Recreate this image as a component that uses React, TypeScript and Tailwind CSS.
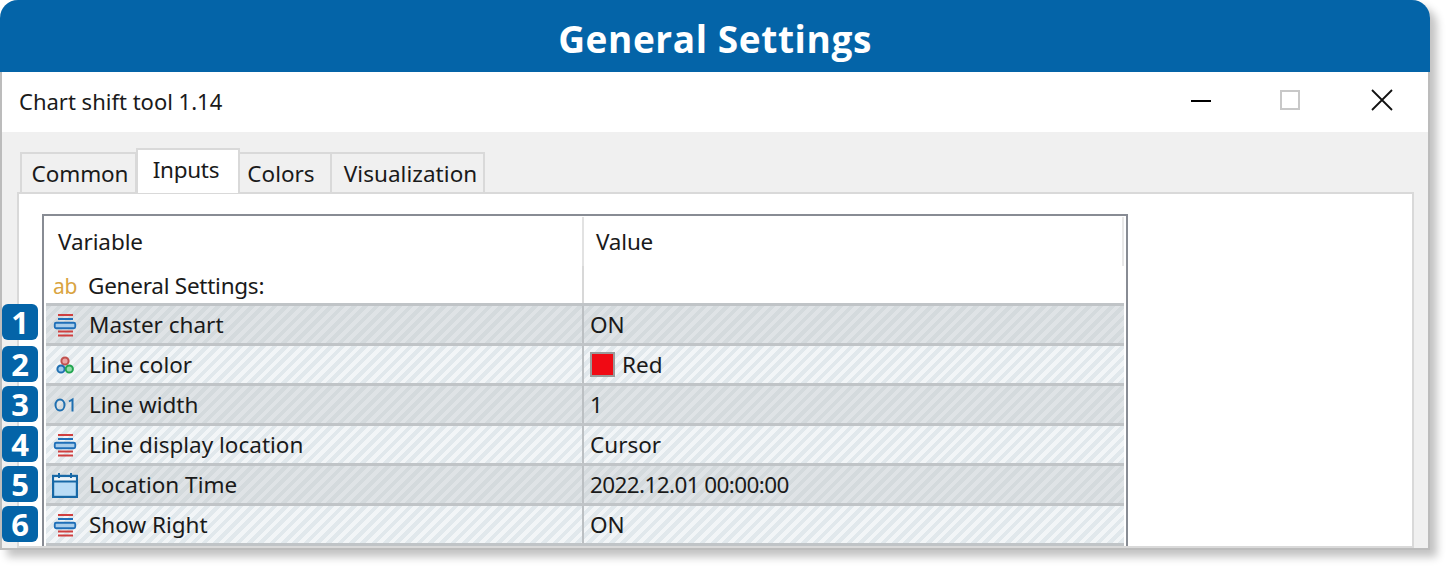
import React from "react";

const Lines = () => (
  <svg width="24" height="24" viewBox="0 0 24 24" className="shrink-0">
    <path d="M5 2H20" stroke="#cf3f3f" strokeWidth="2" />
    <path d="M5 6H20" stroke="#1f6fb8" strokeWidth="2" />
    <rect x="1.75" y="9.75" width="20.5" height="5.5" rx="1.5" fill="#a9cdea" stroke="#1f6fb8" strokeWidth="1.8" />
    <path d="M5 18.5H20" stroke="#cf3f3f" strokeWidth="2" />
    <path d="M5 22.5H20" stroke="#cf3f3f" strokeWidth="2" />
  </svg>
);

const Palette = () => (
  <svg width="24" height="24" viewBox="0 0 24 24" className="shrink-0">
    <circle cx="12" cy="8" r="3.6" fill="#eaa5a5" stroke="#c0504d" strokeWidth="2" />
    <circle cx="8" cy="16" r="3.6" fill="#9cc8ea" stroke="#1f6fb0" strokeWidth="2" />
    <circle cx="16.3" cy="16" r="3.6" fill="#90dca8" stroke="#22a550" strokeWidth="2" />
  </svg>
);

const Num = () => (
  <svg width="24" height="24" viewBox="0 0 24 24" className="shrink-0">
    <ellipse cx="7" cy="12" rx="4.5" ry="5.5" fill="none" stroke="#1f6fb0" strokeWidth="2" />
    <path d="M16 8.5L19.5 6.5V18.5" fill="none" stroke="#1f6fb0" strokeWidth="2" />
  </svg>
);

const Cal = () => (
  <svg width="26" height="26" viewBox="0 0 26 26" className="shrink-0 -ml-[1px] -mr-[1px]">
    <rect x="1" y="4" width="24" height="21" fill="#b9dcf6" stroke="#1768a6" strokeWidth="2.4" />
    <rect x="2.2" y="5.2" width="21.6" height="3.8" fill="#eef3f7" />
    <path d="M1 9.5H25" stroke="#1768a6" strokeWidth="2" />
    <path d="M7 1V6M19 1V6" stroke="#1768a6" strokeWidth="2" />
  </svg>
);

const rows: { icon: React.ReactNode; name: string; value: React.ReactNode }[] = [
  { icon: <Lines />, name: "Master chart", value: "ON" },
  {
    icon: <Palette />,
    name: "Line color",
    value: (
      <span className="flex items-center gap-[7px]">
        <span className="w-[25px] h-[25px] bg-[#f00a14] border-2 border-[#9a9a9a]" />
        <span>Red</span>
      </span>
    ),
  },
  { icon: <Num />, name: "Line width", value: "1" },
  { icon: <Lines />, name: "Line display location", value: "Cursor" },
  { icon: <Cal />, name: "Location Time", value: <span className="tracking-[-0.6px]">2022.12.01 00:00:00</span> },
  { icon: <Lines />, name: "Show Right", value: "ON" },
];

const dark =
  "bg-[repeating-linear-gradient(135deg,#d4dadd_0px,#d4dadd_4px,#dfe3e6_4px,#dfe3e6_8px)]";
const light =
  "bg-[repeating-linear-gradient(135deg,#e1e8ec_0px,#e1e8ec_4px,#f2f5f7_4px,#f2f5f7_8px)]";

const badgeTops = ["top-[304px]", "top-[346px]", "top-[386px]", "top-[426px]", "top-[466px]", "top-[506px]"];

export default function App() {
  return (
    <div className="w-[1450px] h-[570px] bg-white overflow-hidden relative font-['Noto_Sans','Open_Sans',sans-serif] text-[#1a1a1a]">
      <div className="w-[1430px] h-[550px] rounded-t-[18px] bg-[#f0f0f0] flex flex-col overflow-hidden border-b-2 border-[#bcbcbc] shadow-[7px_7px_8px_rgba(0,0,0,0.24)]">
        <div className="h-[72px] shrink-0 bg-[#0464a8] flex items-center justify-center text-white font-bold text-[37px] tracking-[0.6px] pt-[6px] font-['Open_Sans',sans-serif]">
          General Settings
        </div>
        <div className="flex-1 flex flex-col border-x-2 border-[#bcbcbc] min-h-0">
          <div className="h-[60px] shrink-0 bg-white flex items-center pl-[17px] pb-[2px] text-[22px]">
            <span>Chart shift tool 1.14</span>
            <div className="ml-auto flex items-center -mt-[2px]">
              <span className="w-[20px] h-[2px] bg-black mt-[2px] mr-[69px]" />
              <span className="w-[20px] h-[20px] border-2 border-[#c8c8c8] mr-[71px]" />
              <svg width="22" height="22" viewBox="0 0 22 22" className="mr-[35px]">
                <path d="M1 1L21 21M21 1L1 21" stroke="#111" strokeWidth="1.8" />
              </svg>
            </div>
          </div>
          <div className="flex-1 min-h-0 flex flex-col pl-[15px] pr-[14px] pt-[15px]">
            <div className="flex items-end h-[46px] shrink-0 pl-[3px] text-[22.5px] relative z-10 -mb-[1px]">
              <div className="h-[41px] w-[117px] border-2 border-b-0 border-[#d9d9d9] flex items-center justify-center pl-[3px] tracking-[-0.1px]">Common</div>
              <div className="h-[45px] w-[104px] -ml-[1px] bg-white border-2 border-b-0 border-[#d9d9d9] flex items-center justify-center pb-[4px] pr-[4px] tracking-[-0.3px]">Inputs</div>
              <div className="h-[41px] w-[93px] -ml-[1px] border-2 border-l-0 border-b-0 border-[#d9d9d9] flex items-center justify-center pr-[7px]">Colors</div>
              <div className="h-[41px] w-[153px] border-2 border-l-0 border-b-0 border-[#d9d9d9] flex items-center justify-center pl-[6px] tracking-[0.05px]">Visualization</div>
            </div>
            <div className="flex-1 min-h-0 bg-white border-2 border-[#d9d9d9] pl-[23px] pt-[20px] overflow-hidden">
              <div className="w-[1086px] border-2 border-b-0 border-[#888c94] text-[22.5px]">
                <div className="mx-[2px]">
                  <div className="h-[49px] flex mt-[1px]">
                    <div className="w-[538px] pl-[12px] flex items-center border-r-2 border-[#e2e2e2] tracking-[-0.1px]">Variable</div>
                    <div className="flex-1 pl-[12px] flex items-center border-r-2 border-[#e8e8e8] tracking-[-0.2px]">Value</div>
                  </div>
                  <div className="h-[37px] flex">
                    <div className="w-[538px] pl-[7px] pt-[3px] gap-[12px] flex items-center border-r-2 border-[#d8d8d8] tracking-[-0.25px]">
                      <span className="w-[24px] shrink-0 text-[#d9a441] text-[21px] leading-none">ab</span>
                      <span className="-ml-[1px]">General Settings:</span>
                    </div>
                  </div>
                  {rows.map((r, i) => (
                    <div
                      key={r.name}
                      className={`h-[40px] flex border-t-[3px] border-[#c0c4c7] ${i % 2 === 0 ? dark : light}`}
                    >
                      <div className="w-[538px] pl-[7px] gap-[12px] flex items-center border-r-2 border-[#bcc0c3]">
                        {r.icon}
                        <span>{r.name}</span>
                      </div>
                      <div className="flex-1 pl-[6px] flex items-center">{r.value}</div>
                    </div>
                  ))}
                  <div className="h-[40px] border-t-[3px] border-[#c0c4c7] bg-[#e8e8e8]" />
                </div>
              </div>
            </div>
          </div>
        </div>
      </div>
      {[1, 2, 3, 4, 5, 6].map((n, i) => (
        <div
          key={n}
          className={`absolute left-[2px] w-[36px] h-[36px] rounded-[6px] bg-[#0464a8] text-white font-bold text-[31px] leading-none flex items-center justify-center font-['Noto_Sans',sans-serif] ${badgeTops[i]}`}
        >
          {n}
        </div>
      ))}
    </div>
  );
}
